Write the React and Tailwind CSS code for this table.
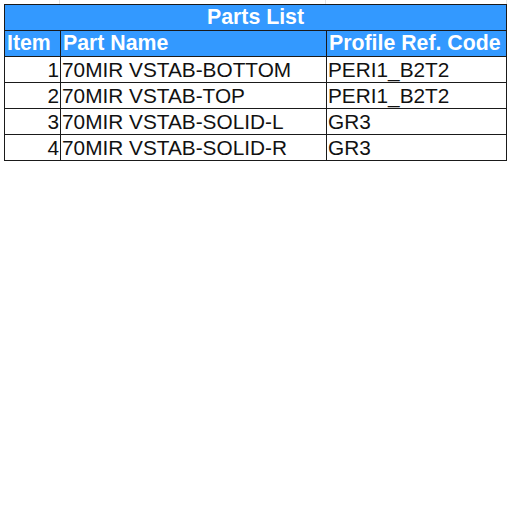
import React from "react";

const rows = [
  ["1", "70MIR VSTAB-BOTTOM", "PERI1_B2T2"],
  ["2", "70MIR VSTAB-TOP", "PERI1_B2T2"],
  ["3", "70MIR VSTAB-SOLID-L", "GR3"],
  ["4", "70MIR VSTAB-SOLID-R", "GR3"],
];

export default function App() {
  return (
    <div className="w-[512px] h-[512px] bg-white overflow-hidden font-['Liberation_Sans',Arial,sans-serif] text-[20.8px] leading-[25px]">
      {/* faint sheet gridlines above the table */}
      <div className="flex h-[4px]">
        <div className="w-[60px] border-r border-[#e3e3e3]" />
        <div className="w-[266px] border-r border-[#e3e3e3]" />
        <div className="w-[181px] border-r border-[#e3e3e3]" />
      </div>
      <div className="flex">
        <div className="w-[4px]" />
        <div className="grid grid-cols-[56px_266px_180px] border-l border-t border-[#1a1a1a]">
          <div className="col-span-3 h-[26px] bg-[#3399ff] border-r border-b border-[#1a1a1a] text-center font-bold text-[21.3px] text-white">
            Parts List
          </div>
          <div className="h-[26px] bg-[#3399ff] border-r border-b border-[#1a1a1a] pl-[2px] font-bold text-[21.3px] text-white">Item</div>
          <div className="h-[26px] bg-[#3399ff] border-r border-b border-[#1a1a1a] pl-[2px] font-bold text-[21.3px] text-white">Part Name</div>
          <div className="h-[26px] bg-[#3399ff] border-r border-b border-[#1a1a1a] pl-[2px] font-bold text-[21.3px] text-white">Profile Ref. Code</div>
          {rows.map(([n, name, code]) => (
            <React.Fragment key={n}>
              <div className="h-[26px] border-r border-b border-[#1a1a1a] pr-[1px] text-right text-[#111]">{n}</div>
              <div className="h-[26px] border-r border-b border-[#1a1a1a] pl-[1px] text-[#111]">{name}</div>
              <div className="h-[26px] border-r border-b border-[#1a1a1a] pl-[1px] text-[#111]">{code}</div>
            </React.Fragment>
          ))}
        </div>
      </div>
    </div>
  );
}
